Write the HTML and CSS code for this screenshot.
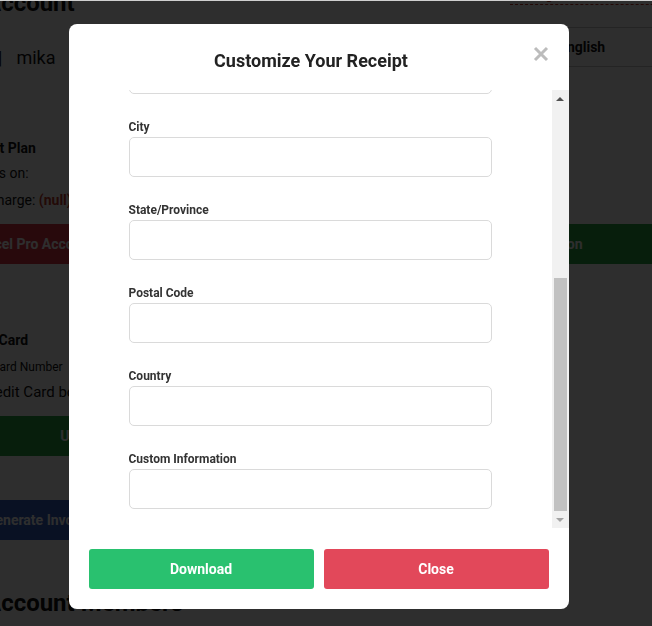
FILE: index.html
```html
<!DOCTYPE html>
<html lang="en">
<head>
<meta charset="utf-8">
<title>Customize Your Receipt</title>
<link rel="stylesheet" href="styles.css">
</head>
<body>
<div class="page">
  <div class="topbar">
    <h2 class="heading">Account</h2>
    <div class="linkcell"><a class="toplink" href="#">Manage account settings online</a></div>
  </div>
  <div class="inforow">
    <div class="user"><span class="sep">|</span><span class="name">mika</span></div>
    <div class="lang">English</div>
  </div>
  <section class="card plan">
    <div class="card-title">Current Plan</div>
    <div class="line l1">Renews on:</div>
    <div class="line l2">Next charge: <b class="null">(null)</b></div>
    <div class="btnrow">
      <div class="pbtn red">Cancel Pro Account</div>
      <div class="pbtn green wide">Change Subscription</div>
    </div>
  </section>
  <section class="card cc">
    <div class="card-title">Credit Card</div>
    <div class="small">Credit Card Number</div>
    <div class="line big">No Credit Card bound</div>
    <div class="pbtn green full">Update Credit Card</div>
  </section>
  <section class="card inv">
    <div class="pbtn blue">Generate Invoice</div>
  </section>
  <h2 class="heading members">Account Members</h2>
</div>

<div class="overlay">
  <div class="modal">
    <div class="modal-header">
      <h3 class="modal-title">Customize Your Receipt</h3>
      <button class="close" type="button" aria-label="Close">
        <svg width="16" height="16" viewBox="0 0 16 16"><path d="M2 2 L14 14 M14 2 L2 14" stroke="#bcbcbc" stroke-width="3"/></svg>
      </button>
    </div>
    <div class="modal-body">
      <div class="viewport">
        <form class="form">
          <div class="field"><label>Company Name</label><div class="input"></div></div>
          <div class="field"><label>Address</label><div class="input"></div></div>
          <div class="field"><label>City</label><div class="input"></div></div>
          <div class="field"><label>State/Province</label><div class="input"></div></div>
          <div class="field"><label>Postal Code</label><div class="input"></div></div>
          <div class="field"><label>Country</label><div class="input"></div></div>
          <div class="field"><label>Custom Information</label><div class="input"></div></div>
        </form>
      </div>
      <div class="scrollbar">
        <div class="sb-btn"><span class="tri up"></span></div>
        <div class="sb-track"><div class="sb-thumb"></div></div>
        <div class="sb-btn"><span class="tri down"></span></div>
      </div>
    </div>
    <div class="modal-footer">
      <button class="mbtn download" type="button">Download</button>
      <button class="mbtn closebtn" type="button">Close</button>
    </div>
  </div>
</div>
</body>
</html>
```
FILE: styles.css
```css
html, body {
  margin: 0;
  padding: 0;
  overflow: hidden;
  height: 100%;
}
body {
  font-family: Roboto, "Liberation Sans", sans-serif;
  background: #fff;
  color: #111;
  border-top: 1px solid #cfcfcf;
  box-sizing: border-box;
}

/* ---------- background page ---------- */
.page {
  margin-left: -43px;
  width: 1000px;
  margin-top: -17px;
}
.topbar {
  display: grid;
  grid-template-columns: 553px 1fr;
  height: 34px;
}
.heading {
  margin: 0;
  font-weight: 700;
  font-size: 24px;
  line-height: 30px;
  color: #111;
  padding-left: 28px;
  align-self: end;
}
.linkcell {
  align-self: start;
}
.toplink {
  display: inline-block;
  color: #c0392b;
  font-size: 14px;
  line-height: 16px;
  text-decoration: none;
  border-bottom: 1px dashed #c0392b;
  padding-bottom: 2px;
  white-space: nowrap;
}
.inforow {
  display: grid;
  grid-template-columns: 583px 1fr;
  align-items: start;
  margin-top: 9px;
  height: 40px;
}
.user {
  display: flex;
  gap: 14px;
  font-size: 18px;
  line-height: 22px;
  padding-left: 41px;
  margin-top: 20px;
}
.lang {
  height: 40px;
  box-sizing: border-box;
  border-top: 1px solid #c8c8c8;
  border-bottom: 1px solid #c8c8c8;
  display: flex;
  align-items: center;
  padding-left: 19px;
  font-weight: 700;
  font-size: 14px;
}
.card {
  padding-top: 1px;
}
.card-title {
  font-weight: 700;
  font-size: 14px;
  line-height: 20px;
}
.plan .card-title { margin-top: 70px; }
.line {
  font-size: 14px;
  line-height: 20px;
}
.l1 { margin-top: 5px; }
.l2 { margin-top: 7px; }
.line.big { font-size: 15px; margin-top: 7px; }
.null { color: #c0392b; }
.btnrow {
  display: flex;
  gap: 10px;
  margin-top: 14px;
}
.pbtn {
  height: 40px;
  display: flex;
  align-items: center;
  justify-content: center;
  color: #fff;
  font-weight: 700;
  font-size: 14px;
  white-space: nowrap;
}
.pbtn.red { background: #dc3545; width: 150px; }
.pbtn.green { background: #28a745; }
.pbtn.wide { width: 800px; }
.pbtn.full { width: 326px; margin-top: 14px; }
.pbtn.blue { background: #3260c4; width: 164px; }
.cc .card-title { margin-top: 65px; }
.small { font-size: 12px; line-height: 16px; margin-top: 9px; }
.inv { margin-top: 43px; }
.heading.members { margin-top: 48px; }

/* ---------- overlay + modal ---------- */
.overlay {
  position: fixed;
  inset: 1px 0 0 0;
  background: rgba(0, 0, 0, 0.82);
  display: flex;
  justify-content: center;
  align-items: flex-start;
  padding: 23px 15px 0 0;
}
.modal {
  width: 500px;
  height: 585px;
  background: #fff;
  border-radius: 8px;
  overflow: hidden;
  display: flex;
  flex-direction: column;
}
.modal-header {
  height: 66px;
  box-sizing: border-box;
  padding: 26px 0 0;
  display: flex;
  justify-content: center;
  position: relative;
}
.modal-title {
  margin: 0;
  font-size: 18px;
  line-height: 22px;
  font-weight: 700;
  color: #222;
  padding-right: 15px;
}
.close {
  position: absolute;
  top: 22px;
  right: 20px;
  border: 0;
  padding: 0;
  background: none;
  width: 16px;
  height: 16px;
  display: flex;
}
.modal-body {
  height: 438px;
  display: flex;
}
.viewport {
  flex: 1;
  overflow: hidden;
  display: flex;
  flex-direction: column;
  justify-content: flex-end;
}
.form {
  padding: 0 60px 19px;
  margin: 0;
}
.field label {
  display: block;
  margin-top: 25px;
  margin-bottom: 2px;
  font-size: 12px;
  line-height: 16px;
  font-weight: 700;
  color: #333;
}
.input {
  height: 40px;
  box-sizing: border-box;
  border: 1px solid #dadada;
  border-radius: 5px;
}
.scrollbar {
  width: 17px;
  background: #f1f1f1;
  display: flex;
  flex-direction: column;
}
.sb-btn {
  height: 17px;
  display: flex;
  align-items: center;
  justify-content: center;
}
.tri {
  width: 0;
  height: 0;
  border-left: 4px solid transparent;
  border-right: 4px solid transparent;
}
.tri.up { border-bottom: 4px solid #505050; }
.tri.down { border-top: 4px solid #a3a3a3; }
.sb-track {
  flex: 1;
  display: flex;
  flex-direction: column;
  justify-content: flex-end;
  padding: 0 2px;
}
.sb-thumb {
  height: 233px;
  background: #c1c1c1;
}
.modal-footer {
  flex: 1;
  display: flex;
  gap: 10px;
  padding: 21px 20px 20px;
}
.mbtn {
  flex: 1;
  height: 40px;
  border: 0;
  border-radius: 3px;
  color: #fff;
  font-family: Roboto, "Liberation Sans", sans-serif;
  font-weight: 700;
  font-size: 14px;
}
.download { background: #29c16f; }
.closebtn { background: #e2485a; }
```
